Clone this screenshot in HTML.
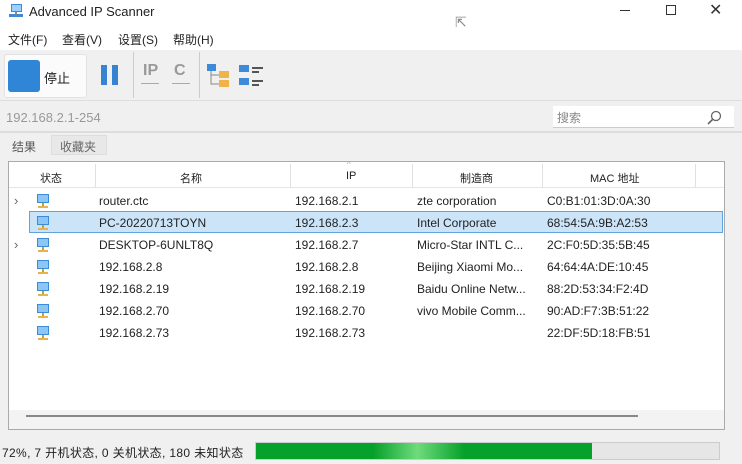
<!DOCTYPE html>
<html><head><meta charset="utf-8"><style>
*{margin:0;padding:0;box-sizing:border-box}
body{width:742px;height:464px;overflow:hidden;background:#f0f0f0;font-family:"Liberation Sans","Noto Sans CJK SC",sans-serif;font-size:12px;color:#222;position:relative}
.abs{position:absolute}
.title{left:0;top:0;width:742px;height:50px;background:#fff}
.tb{left:0;top:50px;width:742px;height:50px;background:#f0f0f0}
.row{position:absolute;left:10px;width:714px;height:22px;line-height:22px}
.row span{position:absolute;white-space:nowrap;overflow:hidden}
.ic{position:absolute;left:25px;top:3px;width:16px;height:16px}
</style></head><body>
<div class="abs title"></div>
<svg class="abs" style="left:8px;top:3px" width="16" height="16"><rect x="3" y="1" width="11" height="8" fill="#3c8ad8"/><rect x="4" y="2" width="9" height="6" fill="#9cd0ff"/><rect x="1" y="11" width="14" height="3" fill="#3c8ad8"/><rect x="7" y="9" width="2" height="3" fill="#888"/></svg>
<div class="abs" style="left:29px;top:4px;font-size:13px;color:#222">Advanced IP Scanner</div>
<div class="abs" style="left:620px;top:10px;width:10px;height:1px;background:#333"></div>
<div class="abs" style="left:666px;top:5px;width:10px;height:10px;border:1px solid #333"></div>
<div class="abs" style="left:709px;top:0px;font-size:16px;color:#333">✕</div>
<div class="abs" style="left:455px;top:14px;font-size:14px;color:#888">⇱</div>
<div class="abs" style="top:31px;left:8px">文件(F)</div>
<div class="abs" style="top:31px;left:62px">查看(V)</div>
<div class="abs" style="top:31px;left:118px">设置(S)</div>
<div class="abs" style="top:31px;left:173px">帮助(H)</div>
<div class="abs tb"></div>
<div class="abs" style="left:4px;top:54px;width:83px;height:44px;background:#fbfbfb;border:1px solid #e2e2e2;border-radius:3px"></div>
<div class="abs" style="left:8px;top:60px;width:32px;height:32px;background:#2f86d6;border-radius:3px"></div>
<div class="abs" style="left:44px;top:68px;font-size:13px">停止</div>
<div class="abs" style="left:101px;top:65px;width:6px;height:20px;background:#3583d1"></div>
<div class="abs" style="left:112px;top:65px;width:6px;height:20px;background:#3583d1"></div>
<div class="abs" style="left:133px;top:52px;width:1px;height:46px;background:#ccc"></div>
<div class="abs" style="left:143px;top:62px;font-size:16px;color:#999;font-weight:bold">IP</div>
<div class="abs" style="left:141px;top:83px;width:18px;height:1px;background:#aaa"></div>
<div class="abs" style="left:174px;top:62px;font-size:16px;color:#999;font-weight:bold">C</div>
<div class="abs" style="left:172px;top:83px;width:18px;height:1px;background:#aaa"></div>
<div class="abs" style="left:199px;top:52px;width:1px;height:46px;background:#ccc"></div>
<svg class="abs" style="left:206px;top:63px" width="28" height="26"><rect x="1" y="1" width="9" height="7" fill="#3c8ad8"/><rect x="13" y="8" width="10" height="7" fill="#f0b34a"/><rect x="13" y="17" width="10" height="7" fill="#f0b34a"/><path d="M5 8V21H13M5 12H13" stroke="#888" fill="none"/></svg>
<svg class="abs" style="left:238px;top:63px" width="26" height="26"><rect x="1" y="2" width="10" height="7" fill="#3c8ad8"/><rect x="1" y="15" width="10" height="7" fill="#3c8ad8"/><path d="M14 5H25M14 9H21M14 18H25M14 22H21" stroke="#555" stroke-width="2"/></svg>
<div class="abs" style="left:0;top:100px;width:742px;height:1px;background:#ddd"></div>
<div class="abs" style="left:6px;top:110px;font-size:13px;color:#999">192.168.2.1-254</div>
<div class="abs" style="left:553px;top:106px;width:181px;height:22px;background:#fff;border-bottom:1px solid #ccc"></div>
<div class="abs" style="left:557px;top:109px;font-size:12px;color:#888">搜索</div>
<svg class="abs" style="left:706px;top:110px" width="16" height="16"><circle cx="10" cy="6" r="4.5" stroke="#666" fill="none" stroke-width="1.3"/><path d="M7 9L2 14" stroke="#666" stroke-width="1.6"/></svg>
<div class="abs" style="left:0;top:131px;width:742px;height:2px;background:#ddd"></div>
<div class="abs" style="left:12px;top:138px;font-size:12px;color:#555">结果</div>
<div class="abs" style="left:51px;top:135px;width:56px;height:20px;background:#e8e8e8;border:1px solid #ddd"></div>
<div class="abs" style="left:60px;top:138px;font-size:12px;color:#666">收藏夹</div>
<div class="abs" style="left:8px;top:161px;width:717px;height:269px;background:#fff;border:1px solid #aaa"></div>
<div class="abs" style="left:9px;top:162px;width:715px;height:26px;background:#fff;border-bottom:1px solid #e5e5e5"></div>
<div class="abs" style="left:95px;top:164px;width:1px;height:24px;background:#e0e0e0"></div>
<div class="abs" style="left:290px;top:164px;width:1px;height:24px;background:#e0e0e0"></div>
<div class="abs" style="left:412px;top:164px;width:1px;height:24px;background:#e0e0e0"></div>
<div class="abs" style="left:542px;top:164px;width:1px;height:24px;background:#e0e0e0"></div>
<div class="abs" style="left:695px;top:164px;width:1px;height:24px;background:#e0e0e0"></div>
<div class="abs" style="left:40px;top:170px;font-size:11px">状态</div>
<div class="abs" style="left:180px;top:170px;font-size:11px">名称</div>
<div class="abs" style="left:346px;top:170px;font-size:11px">IP</div>
<div class="abs" style="left:347px;top:160px;font-size:8px;color:#aaa">^</div>
<div class="abs" style="left:460px;top:170px;font-size:11px">制造商</div>
<div class="abs" style="left:590px;top:170px;font-size:11px">MAC 地址</div>
<div class="abs" style="left:29px;top:211px;width:694px;height:22px;background:#cce4f7;border:1px solid #5fa3e0"></div>
<div id="rows"></div>
<div class="abs" style="left:9px;top:410px;width:715px;height:19px;background:#f3f3f3"></div>
<div class="abs" style="left:26px;top:415px;width:612px;height:2px;background:#888"></div>
<div class="abs" style="left:2px;top:444px;font-size:12px;letter-spacing:0.35px;color:#222">72%, 7 开机状态, 0 关机状态, 180 未知状态</div>
<div class="abs" style="left:255px;top:442px;width:465px;height:18px;background:#e6e6e6;border:1px solid #ccc"></div>
<div class="abs" style="left:256px;top:443px;width:336px;height:16px;background:linear-gradient(90deg,#06a12a 0%,#06a12a 35%,#6fdb7d 48%,#06a12a 62%,#06a12a 100%)"></div>
<script>
var d=[["router.ctc","192.168.2.1","zte corporation","C0:B1:01:3D:0A:30",1],
["PC-20220713TOYN","192.168.2.3","Intel Corporate","68:54:5A:9B:A2:53",0],
["DESKTOP-6UNLT8Q","192.168.2.7","Micro-Star INTL C...","2C:F0:5D:35:5B:45",1],
["192.168.2.8","192.168.2.8","Beijing Xiaomi Mo...","64:64:4A:DE:10:45",0],
["192.168.2.19","192.168.2.19","Baidu Online Netw...","88:2D:53:34:F2:4D",0],
["192.168.2.70","192.168.2.70","vivo Mobile Comm...","90:AD:F7:3B:51:22",0],
["192.168.2.73","192.168.2.73","","22:DF:5D:18:FB:51",0]];
var h="";d.forEach(function(r,i){var t=190+i*22;
h+='<div class="row" style="top:'+t+'px">'+(r[4]?'<span style="left:4px;color:#666;font-size:13px">›</span>':'')+
'<svg class="ic" viewBox="0 0 16 16"><rect x="2" y="1" width="12" height="9" fill="#3c8ad8"/><rect x="3" y="2" width="10" height="7" fill="#8cc6f5"/><rect x="7" y="10" width="2" height="3" fill="#c9a030"/><rect x="3" y="13" width="10" height="2" fill="#e8b44a"/></svg>'+
'<span style="left:89px">'+r[0]+'</span><span style="left:285px">'+r[1]+'</span><span style="left:407px">'+r[2]+'</span><span style="left:537px">'+r[3]+'</span></div>';});
document.getElementById("rows").innerHTML=h;
</script>
</body></html>
